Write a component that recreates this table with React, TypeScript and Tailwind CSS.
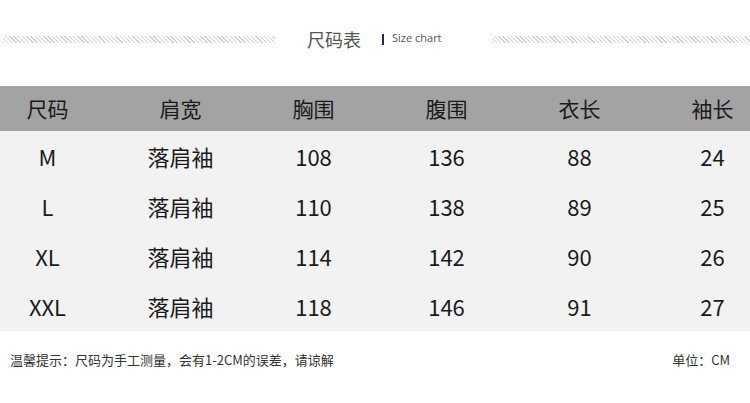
const headers = ['尺码', '肩宽', '胸围', '腹围', '衣长', '袖长'];

const rows = [
    ['M', '落肩袖', '108', '136', '88', '24'],
    ['L', '落肩袖', '110', '138', '89', '25'],
    ['XL', '落肩袖', '114', '142', '90', '26'],
    ['XXL', '落肩袖', '118', '146', '91', '27'],
];

const font = "font-['Noto_Sans_CJK_SC',sans-serif]";

function Hatch({ className }: { className: string }) {
    return (
        <div
            className={`h-[7px] bg-[repeating-linear-gradient(45deg,#d2d2d2_0px,#d2d2d2_1px,transparent_1px,transparent_3px)] ${className}`}
        />
    );
}

function Row({ cells, className }: { cells: string[]; className: string }) {
    return (
        <div className={`flex items-center -ml-[19px] ${className}`}>
            {cells.map((cell, i) => (
                <div key={i} className="w-[133px] shrink-0 text-center">
                    {cell}
                </div>
            ))}
        </div>
    );
}

export default function App() {
    return (
        <div className={`w-[750px] h-[403px] bg-white overflow-hidden ${font}`}>
            {/* Title */}
            <div className="flex items-center h-[20px] mt-[29px] pl-[3px]">
                <Hatch className="w-[272px]" />
                <span className="ml-[32px] text-[18px] leading-none text-[#555]">尺码表</span>
                <div className="ml-[21px] w-[2px] h-[11px] bg-[#1c2a5c]" />
                <span className="ml-[8px] -mt-[3px] text-[11px] leading-none text-[#555] font-['Open_Sans',sans-serif]">
                    Size chart
                </span>
                <Hatch className="ml-[50px] flex-1" />
            </div>

            {/* Table */}
            <div className="mt-[37px] overflow-hidden">
                <Row cells={headers} className="h-[45px] bg-[#a3a3a3] text-[21px] text-[#1a1a1a]" />
                <div className="bg-[#f2f2f2]">
                    {rows.map((r, i) => (
                        <Row key={i} cells={r} className="h-[50px] text-[22px] text-[#1a1a1a]" />
                    ))}
                </div>
            </div>

            {/* Footer */}
            <div className="flex items-center justify-between mt-[19px] pl-[10px] pr-[20px] text-[13px] text-[#333]">
                <span>温馨提示：尺码为手工测量，会有1-2CM的误差，请谅解</span>
                <span>单位：CM</span>
            </div>
        </div>
    );
}
